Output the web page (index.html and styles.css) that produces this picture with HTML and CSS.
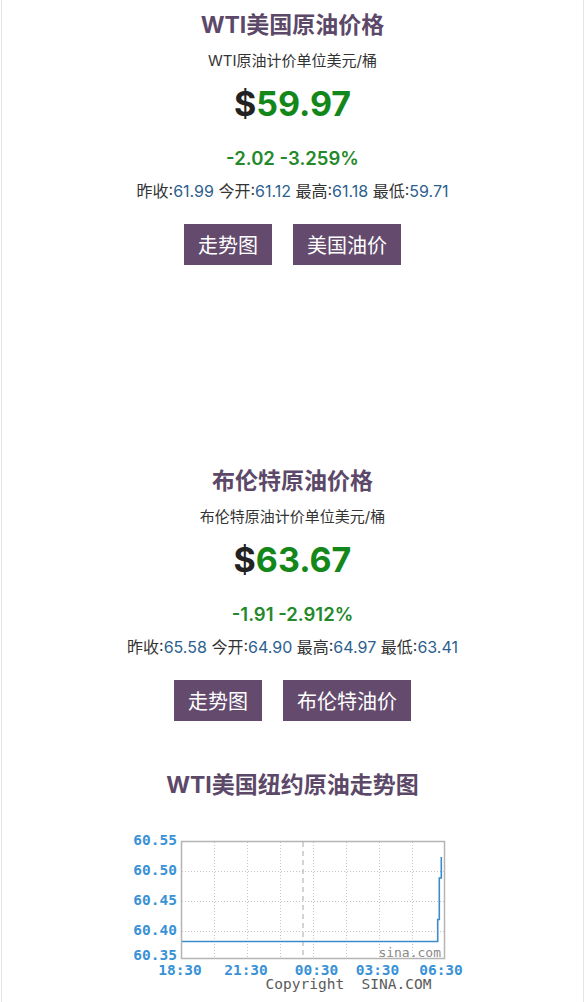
FILE: index.html
```html
<!DOCTYPE html>
<html lang="zh-CN">
<head>
<meta charset="utf-8">
<title>原油价格</title>
<link rel="stylesheet" href="styles.css">
</head>
<body>
<div class="page">
  <section class="quote">
    <h1 class="quote-title">WTI美国原油价格</h1>
    <p class="quote-unit">WTI原油计价单位美元/桶</p>
    <p class="quote-price"><span class="dollar">$</span>59.97</p>
    <p class="quote-change">-2.02 -3.259%</p>
    <p class="quote-stats">昨收:<span class="num">61.99</span> 今开:<span class="num">61.12</span> 最高:<span class="num">61.18</span> 最低:<span class="num">59.71</span></p>
    <div class="quote-actions">
      <a class="btn">走势图</a>
      <a class="btn">美国油价</a>
    </div>
  </section>

  <div class="ad-slot"></div>

  <section class="quote">
    <h1 class="quote-title">布伦特原油价格</h1>
    <p class="quote-unit">布伦特原油计价单位美元/桶</p>
    <p class="quote-price"><span class="dollar">$</span>63.67</p>
    <p class="quote-change">-1.91 -2.912%</p>
    <p class="quote-stats">昨收:<span class="num">65.58</span> 今开:<span class="num">64.90</span> 最高:<span class="num">64.97</span> 最低:<span class="num">63.41</span></p>
    <div class="quote-actions">
      <a class="btn">走势图</a>
      <a class="btn">布伦特油价</a>
    </div>
  </section>

  <section class="trend">
    <h2 class="trend-title">WTI美国纽约原油走势图</h2>
    <svg class="chart" width="344" height="174" viewBox="120 828 344 174" xmlns="http://www.w3.org/2000/svg">
      <rect x="180.5" y="841.5" width="263" height="117" fill="#fff" stroke="#b4b4b4" stroke-width="1.5"/>
      <g stroke="#c4c4c4" stroke-width="1" stroke-dasharray="1 2">
        <line x1="213.5" y1="842" x2="213.5" y2="958"/>
        <line x1="246.5" y1="842" x2="246.5" y2="958"/>
        <line x1="279.5" y1="842" x2="279.5" y2="958"/>
        <line x1="312.5" y1="842" x2="312.5" y2="958"/>
        <line x1="345.5" y1="842" x2="345.5" y2="958"/>
        <line x1="378.5" y1="842" x2="378.5" y2="958"/>
        <line x1="411.5" y1="842" x2="411.5" y2="958"/>
        <line x1="181" y1="871.5" x2="443" y2="871.5"/>
        <line x1="181" y1="901.5" x2="443" y2="901.5"/>
        <line x1="181" y1="931.5" x2="443" y2="931.5"/>
      </g>
      <line x1="302" y1="842" x2="302" y2="958" stroke="#a8a8a8" stroke-width="1" stroke-dasharray="5 4"/>
      <text x="440" y="957" class="watermark" text-anchor="end">sina.com</text>
      <polyline points="181,941.5 436.7,941.5 436.7,919.5 438.3,919.5 438.3,878 440.3,878 440.3,857" fill="none" stroke="#3a8ccb" stroke-width="1.6"/>
      <g class="ylab" text-anchor="end">
        <text x="176" y="845">60.55</text>
        <text x="176" y="875">60.50</text>
        <text x="176" y="905">60.45</text>
        <text x="176" y="935">60.40</text>
        <text x="176" y="960">60.35</text>
      </g>
      <g class="xlab" text-anchor="middle">
        <text x="179" y="975">18:30</text>
        <text x="245" y="975">21:30</text>
        <text x="315.5" y="975">00:30</text>
        <text x="376.5" y="975">03:30</text>
        <text x="440" y="975">06:30</text>
      </g>
      <text x="347.5" y="989" class="copy" text-anchor="middle">Copyright  SINA.COM</text>
    </svg>
  </section>
</div>
</body>
</html>
```

FILE: styles.css
```css
html, body {
  margin: 0;
  padding: 0;
  background: #fff;
}

body {
  font-family: "Inter", "Noto Sans CJK SC", sans-serif;
  color: #333;
}

.page {
  margin: 0 1px;
  min-height: 1002px;
  border-left: 1px solid #e4e4e4;
  border-right: 1px solid #e4e4e4;
  box-sizing: border-box;
  display: flex;
  flex-direction: column;
  align-items: center;
}

.quote {
  display: flex;
  flex-direction: column;
  align-items: center;
  width: 100%;
}

.quote .quote-title,
.trend .trend-title {
  margin: 10px 0 0;
  font-size: 23px;
  line-height: 30px;
  font-weight: 700;
  color: #5c4868;
}

.quote .quote-unit {
  margin: 11px 0 0;
  font-size: 15px;
  line-height: 20px;
  color: #333;
}

.quote .quote-price {
  margin: 11px 0 0;
  font-size: 34px;
  line-height: 44px;
  font-weight: 700;
  color: #14871a;
}

.dollar {
  color: #222;
}

.quote .quote-change {
  margin: 20px 0 0;
  font-size: 18.5px;
  line-height: 24px;
  font-weight: 600;
  color: #23892a;
}

.quote .quote-stats {
  margin: 11px 0 0;
  font-size: 16px;
  line-height: 20px;
  color: #333;
}

.num {
  color: #2c5f8e;
}

.quote-actions {
  margin-top: 23px;
  display: flex;
  gap: 21px;
}

.btn {
  display: flex;
  align-items: center;
  height: 41px;
  padding: 0 14px;
  background: #644b6e;
  color: #fff;
  font-size: 20px;
  text-decoration: none;
}

.ad-slot {
  height: 191px;
  width: 100%;
}

.trend {
  margin-top: 39px;
  display: flex;
  flex-direction: column;
  align-items: center;
  width: 100%;
}

.chart {
  display: block;
  margin-top: 28px;
}

.ylab text, .xlab text {
  font-family: "DejaVu Sans Mono", monospace;
  font-size: 14.5px;
  font-weight: 700;
  fill: #3a92d6;
}

.watermark {
  font-family: "DejaVu Sans Mono", monospace;
  font-size: 13px;
  fill: #8a8a8a;
}

.copy {
  font-family: "DejaVu Sans Mono", monospace;
  font-size: 14.5px;
  fill: #5a5a5a;
  white-space: pre;
}
```
